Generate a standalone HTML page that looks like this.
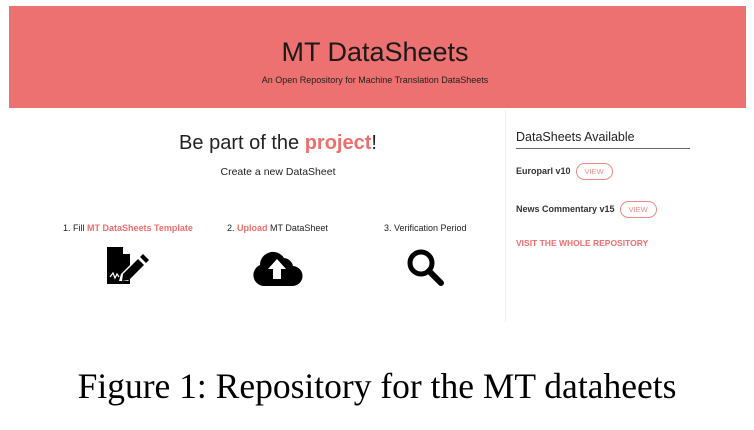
<!DOCTYPE html>
<html><head><style>
body{margin:0;width:754px;height:430px;background:#fff;position:relative;font-family:"Liberation Sans",sans-serif;color:#222;overflow:hidden}
.a{position:absolute;white-space:nowrap}
.r{color:#ec6f6e;font-weight:bold}
.btn{display:inline-block;border:1px solid #ec8a88;border-radius:10px;color:#ec8a88;font-size:7.5px;padding:3px 8px;margin-left:5px;vertical-align:middle}
</style></head><body>
<div class="a" style="left:9px;top:6px;width:737px;height:102px;background:#ec7170"></div>
<div class="a" style="left:0;width:750px;top:37px;text-align:center;font-size:27px;color:#1a1a1a">MT DataSheets</div>
<div class="a" style="left:0;width:750px;top:75px;text-align:center;font-size:9px;color:#222">An Open Repository for Machine Translation DataSheets</div>
<div class="a" style="left:505px;top:110px;width:1px;height:212px;background:#eee"></div>
<div class="a" style="left:0;width:556px;top:132px;text-align:center;font-size:20px;color:#222">Be part of the <span class="r">project</span>!</div>
<div class="a" style="left:0;width:556px;top:166px;text-align:center;font-size:10.5px">Create a new DataSheet</div>
<div class="a" style="left:63px;top:223px;font-size:9px">1. Fill <span class="r">MT DataSheets Template</span></div>
<div class="a" style="left:227px;top:223px;font-size:9px">2. <span class="r">Upload</span> MT DataSheet</div>
<div class="a" style="left:384px;top:223px;font-size:9px">3. Verification Period</div>
<svg class="a" style="left:106px;top:247px" width="44" height="38" viewBox="0 0 44 38">
<path d="M1 0H17L24 7V18L15 27L13 34H22L24 32V37H1Z" fill="#000"/><path d="M17 0V7H24Z" fill="#fff"/>
<path d="M4 30L7 26L9 31L11 27L13 30" stroke="#fff" stroke-width="1.2" fill="none"/>
<path d="M17 27L32 12L38 18L23 33L16 34Z" fill="#000"/><path d="M34 10L37 7L43 13L40 16Z" fill="#000"/>
</svg>
<svg class="a" style="left:251px;top:250px" width="52" height="36" viewBox="0 0 52 36">
<path d="M12 36A11 11 0 0 1 9 15A13 13 0 0 1 33 8A10 10 0 0 1 42 16A10 10 0 0 1 41 36Z" fill="#000"/>
<path d="M26 9L35 19H30V29H22V19H17Z" fill="#fff"/>
</svg>
<svg class="a" style="left:406px;top:248px" width="40" height="38" viewBox="0 0 40 38">
<circle cx="15" cy="15" r="11" stroke="#000" stroke-width="5" fill="none"/>
<path d="M23 23L35 35" stroke="#000" stroke-width="6" stroke-linecap="round"/>
</svg>
<div class="a" style="left:516px;top:130px;font-size:12.5px;color:#222">DataSheets Available</div>
<div class="a" style="left:516px;top:148px;width:174px;height:1px;background:#666"></div>
<div class="a" style="left:516px;top:163px;font-size:9px;font-weight:bold;color:#333">Europarl v10<span class="btn" style="font-weight:normal">VIEW</span></div>
<div class="a" style="left:516px;top:201px;font-size:9px;font-weight:bold;color:#333">News Commentary v15<span class="btn" style="font-weight:normal">VIEW</span></div>
<div class="a r" style="left:516px;top:238px;font-size:8.5px">VISIT THE WHOLE REPOSITORY</div>
<div class="a" style="left:0;width:754px;top:365px;text-align:center;font-family:'Liberation Serif',serif;font-size:35.5px;color:#000">Figure 1: Repository for the MT dataheets</div>
</body></html>
